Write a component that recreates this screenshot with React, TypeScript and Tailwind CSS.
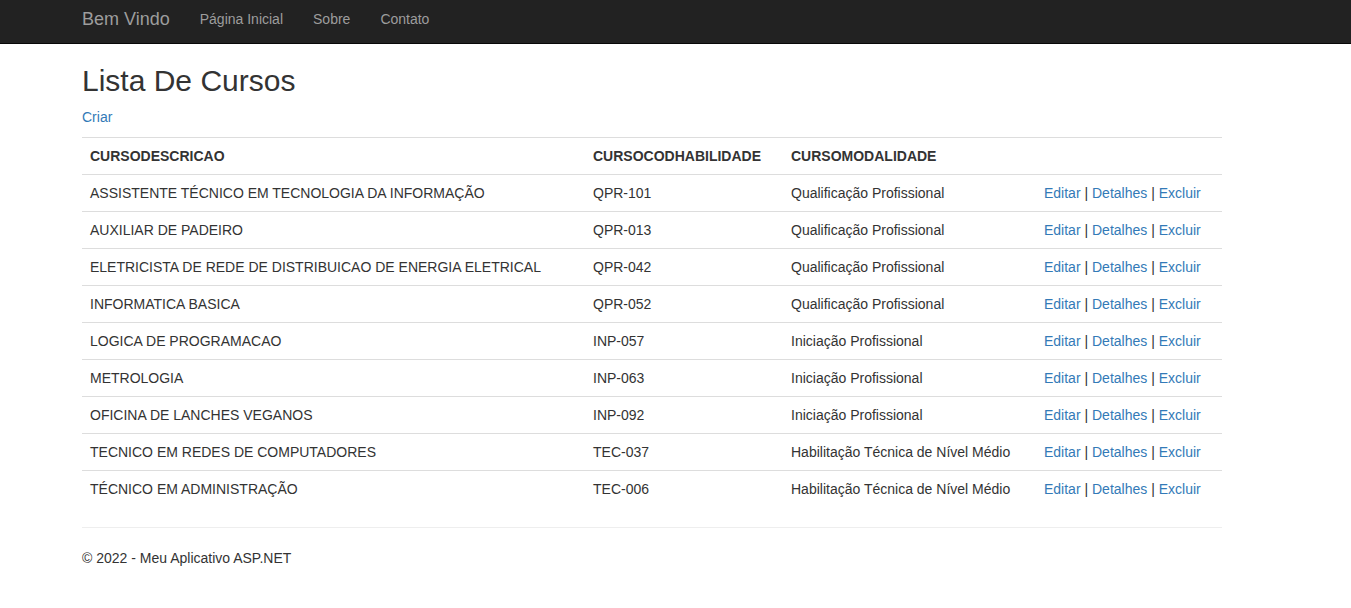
import React from "react";

const rows = [
  ["ASSISTENTE TÉCNICO EM TECNOLOGIA DA INFORMAÇÃO", "QPR-101", "Qualificação Profissional"],
  ["AUXILIAR DE PADEIRO", "QPR-013", "Qualificação Profissional"],
  ["ELETRICISTA DE REDE DE DISTRIBUICAO DE ENERGIA ELETRICAL", "QPR-042", "Qualificação Profissional"],
  ["INFORMATICA BASICA", "QPR-052", "Qualificação Profissional"],
  ["LOGICA DE PROGRAMACAO", "INP-057", "Iniciação Profissional"],
  ["METROLOGIA", "INP-063", "Iniciação Profissional"],
  ["OFICINA DE LANCHES VEGANOS", "INP-092", "Iniciação Profissional"],
  ["TECNICO EM REDES DE COMPUTADORES", "TEC-037", "Habilitação Técnica de Nível Médio"],
  ["TÉCNICO EM ADMINISTRAÇÃO", "TEC-006", "Habilitação Técnica de Nível Médio"],
];

export default function App() {
  return (
    <div className="min-h-[608px] bg-white text-[14px] leading-[20px] text-[#333] font-['Liberation_Sans',Arial,sans-serif]">
      <nav className="h-[44px] bg-[#222] border-b border-[#080808]">
        <div className="w-[1170px] ml-[67px] px-[15px] flex items-start pt-[9px]">
          <span className="text-[18px] leading-[20px] text-[#9d9d9d] pr-[15px]">Bem Vindo</span>
          <span className="text-[#9d9d9d] px-[15px]">Página Inicial</span>
          <span className="text-[#9d9d9d] px-[15px]">Sobre</span>
          <span className="text-[#9d9d9d] px-[15px]">Contato</span>
        </div>
      </nav>
      <div className="w-[1170px] ml-[67px] px-[15px]">
        <h2 className="text-[30px] leading-[33px] mt-[20px] mb-[10px] font-normal">Lista De Cursos</h2>
        <p className="mb-[10px]">
          <span className="text-[#337ab7]">Criar</span>
        </p>
        <table className="w-[1140px] border-collapse table-fixed">
          <colgroup>
            <col className="w-[503px]" />
            <col className="w-[198px]" />
            <col className="w-[253px]" />
            <col className="w-[186px]" />
          </colgroup>
          <thead>
            <tr className="border-t border-[#ddd]">
              <th className="text-left font-bold px-[8px] py-[8px] border-b border-[#ddd] h-[37px]">CURSODESCRICAO</th>
              <th className="text-left font-bold px-[8px] py-[8px] border-b border-[#ddd]">CURSOCODHABILIDADE</th>
              <th className="text-left font-bold px-[8px] py-[8px] border-b border-[#ddd]">CURSOMODALIDADE</th>
              <th className="px-[8px] py-[8px] border-b border-[#ddd]"></th>
            </tr>
          </thead>
          <tbody>
            {rows.map((r, i) => (
              <tr key={i} className={i < rows.length - 1 ? "border-b border-[#ddd]" : ""}>
                <td className="px-[8px] py-[8px] h-[37px] whitespace-nowrap">{r[0]}</td>
                <td className="px-[8px] py-[8px]">{r[1]}</td>
                <td className="px-[8px] py-[8px] whitespace-nowrap">{r[2]}</td>
                <td className="px-[8px] py-[8px] whitespace-nowrap">
                  <span className="text-[#337ab7]">Editar</span> |{" "}
                  <span className="text-[#337ab7]">Detalhes</span> |{" "}
                  <span className="text-[#337ab7]">Excluir</span>
                </td>
              </tr>
            ))}
          </tbody>
        </table>
        <hr className="mt-[19px] mb-[20px] border-0 border-t border-[#eee]" />
        <footer>
          <p>© 2022 - Meu Aplicativo ASP.NET</p>
        </footer>
      </div>
    </div>
  );
}
